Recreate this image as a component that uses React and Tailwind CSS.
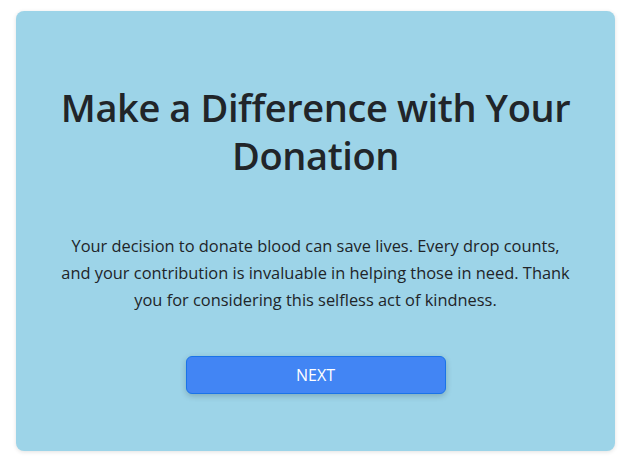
import React from 'react';

export default function App() {
    return (
        <div className="w-[628px] h-[459px] bg-white pt-[11px] pl-[16px]" style={{ fontFamily: '"Open Sans", "Noto Sans", sans-serif' }}>
            <div className="w-[599px] h-[440px] bg-[#9dd4e8] rounded-lg shadow-[0_1px_4px_rgba(0,0,0,0.12)] flex flex-col items-center px-10 pt-[72px]">
                <h1 className="text-[38px] leading-[48px] font-semibold text-[#212529] text-center tracking-[-0.4px]">
                    Make a Difference with Your Donation
                </h1>
                <p className="mt-[53px] text-[16.4px] leading-[27px] text-[#212529] text-center max-w-[515px]">
                    Your decision to donate blood can save lives. Every drop counts, and your contribution is invaluable in helping those in need. Thank you for considering this selfless act of kindness.
                </p>
                <button className="mt-[43px] w-[260px] h-[38px] bg-[#4285f4] border border-[#1a73e8] rounded-md text-white text-[16px] shadow-[0_2px_6px_rgba(0,0,0,0.2)]">
                    NEXT
                </button>
            </div>
        </div>
    );
}
